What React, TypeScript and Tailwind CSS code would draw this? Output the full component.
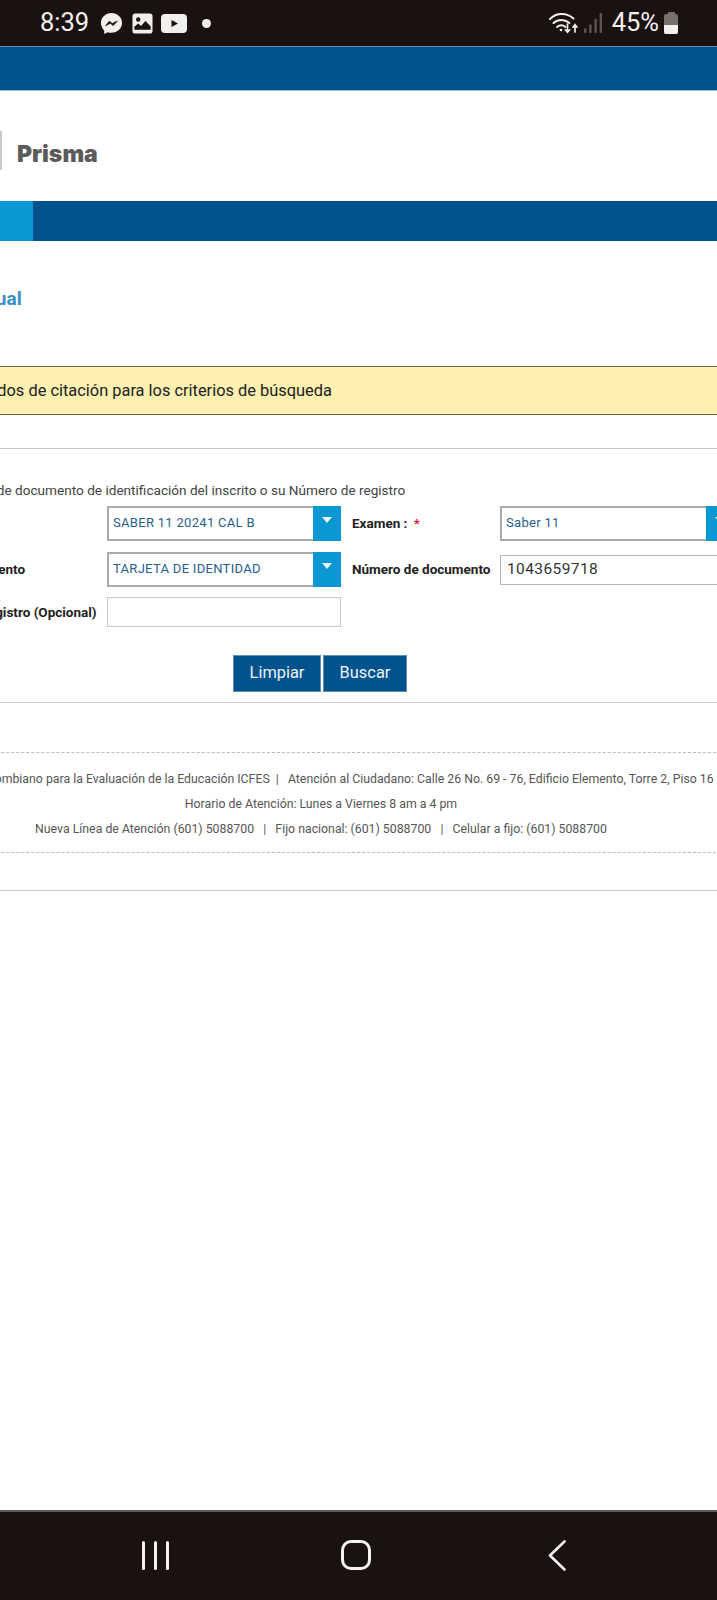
const StatusIcons = () => (
  <div className="flex items-center">
    {/* messenger */}
    <svg viewBox="0 0 24 24" className="w-[23px] h-[23px] ml-[11px]">
      <path d="M12 1C5.800 1 1 5.500 1 11.500c0 3.100 1.300 5.800 3.400 7.700V23l3.600-2c1.200.4 2.600.6 4 .6 6.200 0 11-4.500 11-10.100C23 5.500 18.200 1 12 1z" fill="#f2f0ee" />
      <path d="M5.800 14.200l4-4.600 3 2.400 5.200-2.600-4.200 4.800-3-2.400z" fill="#1a120e" stroke="#1a120e" strokeWidth="0.8" />
    </svg>
    {/* gallery */}
    <svg viewBox="0 0 22 22" className="w-[21px] h-[21px] ml-[9px]">
      <rect x="0.500" y="0.500" width="21" height="21" rx="3" fill="#f2f0ee" />
      <circle cx="6.500" cy="6.800" r="2.300" fill="#1a120e" />
      <path d="M2.500 17.500v-3l4-3.500 3 2.500 4.500-5 5.500 5.500v3.500z" fill="#1a120e" />
    </svg>
    {/* youtube */}
    <svg viewBox="0 0 26 19" className="w-[26px] h-[19px] ml-[8px]">
      <rect x="0" y="0" width="26" height="19" rx="4" fill="#f2f0ee" />
      <path d="M10.500 6l6.500 3.500-6.500 3.500z" fill="#1a120e" />
    </svg>
    <div className="w-[9px] h-[9px] rounded-full bg-[#f2f0ee] ml-[15px]" />
  </div>
);

const SelectBox = ({ value }: { value: string }) => (
  <div className="flex shrink-0 h-[35px] w-[234px] border-2 border-[#a9aaa9] bg-white">
    <span className="flex-1 pl-[4px] text-[13px] leading-[30px] text-[#26608c] tracking-[0.3px]">{value}</span>
    <span className="flex w-[28px] -my-[2px] -mr-[2px] bg-[#0a98d2] justify-center pt-[11px]">
      <svg viewBox="0 0 10 6" className="w-[10px] h-[6px]">
        <path d="M0 0h10L5 6z" fill="#e8f4fa" />
      </svg>
    </span>
  </div>
);

export default function App() {
  return (
    <div className="w-[717px] h-[1600px] flex flex-col overflow-hidden bg-white font-['Roboto',sans-serif]">
      {/* barra de estado */}
      <div className="flex items-center justify-between h-[46px] bg-[#1a120e] pl-[40px] pr-[39px] shrink-0">
        <div className="flex items-center">
          <span className="text-[25.500px] leading-none text-[#f2f0ee]">8:39</span>
          <StatusIcons />
        </div>
        <div className="flex items-center">
          <svg viewBox="0 0 29 24" className="w-[30px] h-[24px]" fill="none" stroke="#f2f0ee" strokeLinecap="round">
            <path d="M1.500 8C8 1.500 18 1.500 25 7.500" strokeWidth="2" />
            <path d="M5 12c4.500-4 11-4 16 0" strokeWidth="2" />
            <path d="M8.500 16c2.500-2 6-2 8.500 0" strokeWidth="2" />
            <circle cx="12.500" cy="19" r="1.300" fill="#f2f0ee" stroke="none" />
            <path d="M19 13v8M16.800 18.800L19 21.300l2.200-2.500M26.500 21v-7M24.500 16.200l2-2.500 2 2.500" strokeWidth="1.700" />
          </svg>
          <svg viewBox="0 0 19 21" className="w-[18px] h-[20px] ml-[6px]" fill="#5c5755">
            <rect x="0" y="16" width="2.500" height="5" rx="1" />
            <rect x="5.500" y="12" width="2.500" height="9" rx="1" />
            <rect x="11" y="6" width="2.500" height="15" rx="1" />
            <rect x="16.500" y="0" width="2.500" height="21" rx="1" />
          </svg>
          <span className="ml-[10px] text-[25.500px] leading-none text-[#f2f0ee]">45%</span>
          <div className="ml-[5px] flex flex-col items-center">
            <div className="w-[7px] h-[2px] bg-[#77706d] rounded-t-[1px]" />
            <div className="w-[14px] h-[20px] rounded-[2px] bg-[#77706d] flex flex-col justify-end overflow-hidden">
              <div className="h-[9px] bg-[#f2f0ee]" />
            </div>
          </div>
        </div>
      </div>

      {/* cabecera */}
      <div className="h-[45px] shrink-0 bg-[#00528c] border-t border-t-[#6f8cab] border-b border-b-[#9cc3dc]" />
      <div className="h-[110px] shrink-0 flex items-center">
        <div className="h-[39px] w-[2px] bg-[#c9c9c9] mt-[8px]" />
        <span className="ml-[15px] text-[23px] font-black leading-none font-['Inter',sans-serif] text-[#5b5b5b] mt-[16px]">
          Prisma
        </span>
      </div>
      <div className="h-[40px] shrink-0 bg-[#00528c]">
        <div className="h-full w-[33px] bg-[#0a98d2]" />
      </div>

      {/* contenido, desplazado a la izquierda como en la captura */}
      <div className="flex-1 -ml-[84px] w-[810px] flex flex-col">
        <h1 className="mt-[47px] ml-[-52px] h-[22px] text-[19px] leading-[22px] font-bold text-[#3a8fc7] whitespace-nowrap">
          Citación individual
        </h1>

        <div className="mt-[56px] h-[49px] flex items-center bg-[#fdf0b0] border-y border-y-[#6e6638]">
          <span className="-ml-[107px] mt-[1px] text-[16.400px] text-[#222] whitespace-nowrap">
            No se encontraron resultados de citación para los criterios de búsqueda
          </span>
        </div>

        <div className="mt-[33px] border-t border-t-[#c8c8c8]" />

        <p className="mt-[32px] -ml-[21px] text-[13.600px] leading-[18px] text-[#444] whitespace-nowrap">
          Digite el número de documento de identificación del inscrito o su Número de registro
        </p>

        <div className="mt-[7px] flex flex-col gap-[10px]">
          <div className="flex items-center">
            <span className="w-[191px] shrink-0" />
            <SelectBox value="SABER 11 20241 CAL B" />
            <span className="w-[148px] ml-[11px] shrink-0 text-[13.500px] font-bold text-[#222]">
              Examen : <span className="text-[#d3262c] ml-[3px]">*</span>
            </span>
            <SelectBox value="Saber 11" />
          </div>
          <div className="flex items-center mt-[1px]">
            <span className="w-[191px] shrink-0 text-[13.500px] font-bold text-[#222]">
              <span className="block -ml-[8px] whitespace-nowrap">Tipo de documento</span>
            </span>
            <SelectBox value="TARJETA DE IDENTIDAD" />
            <span className="w-[148px] ml-[11px] shrink-0 text-[13.500px] font-bold text-[#222] whitespace-nowrap">Número de documento</span>
            <div className="w-[234px] h-[30px] shrink-0 flex items-center pl-[6px] border border-[#b5b5b5] text-[15.500px] tracking-[0.4px] text-[#333]">
              1043659718
            </div>
          </div>
          <div className="flex items-center">
            <span className="w-[191px] shrink-0 text-[13.500px] font-bold text-[#222]">
              <span className="block -ml-[3px] whitespace-nowrap">Número de registro (Opcional)</span>
            </span>
            <div className="w-[234px] h-[30px] shrink-0 border border-[#c8c8c8]" />
          </div>
        </div>

        <div className="mt-[28px] flex justify-center gap-[2px] pr-[2px]">
          <button className="w-[88px] h-[37px] bg-[#00528c] border border-[#5e8eb0] text-[16.400px] text-[#eef4f8]">Limpiar</button>
          <button className="w-[84px] h-[37px] bg-[#00528c] border border-[#5e8eb0] text-[16.400px] text-[#eef4f8]">Buscar</button>
        </div>

        <div className="mt-[10px] border-t border-t-[#c8c8c8]" />

        {/* pie */}
        <div className="mt-[49px] border-y border-dashed border-y-[#bdbdbd] pt-[14px] pb-[10px] text-center text-[12.300px] leading-[25px] text-[#555] whitespace-nowrap">
          <p>Instituto Colombiano para la Evaluación de la Educación ICFES&nbsp; | &nbsp; Atención al Ciudadano: Calle 26 No. 69 - 76, Edificio Elemento, Torre 2, Piso 16</p>
          <p>Horario de Atención: Lunes a Viernes 8 am a 4 pm</p>
          <p>Nueva Línea de Atención (601) 5088700 &nbsp;&nbsp;|&nbsp;&nbsp; Fijo nacional: (601) 5088700 &nbsp;&nbsp;|&nbsp;&nbsp; Celular a fijo: (601) 5088700</p>
        </div>

        <div className="mt-[37px] border-t border-t-[#c8c8c8]" />
      </div>

      {/* navegación android */}
      <div className="h-[90px] shrink-0 bg-[#1a120e] border-t-2 border-t-[#5f5854] flex items-center justify-between pl-[142px] pr-[151px] pb-[2px]">
        <div className="flex gap-[9px]">
          <div className="w-[3px] h-[29px] rounded-full bg-[#f5f3f1]" />
          <div className="w-[3px] h-[29px] rounded-full bg-[#f5f3f1]" />
          <div className="w-[3px] h-[29px] rounded-full bg-[#f5f3f1]" />
        </div>
        <div className="w-[30px] h-[30px] rounded-[10px] border-[3px] border-[#f5f3f1] mr-[5px]" />
        <svg viewBox="0 0 18 31" className="w-[18px] h-[31px]" fill="none" stroke="#f5f3f1" strokeWidth="2.600" strokeLinecap="round" strokeLinejoin="round">
          <path d="M16.500 1.500L2 15.500l14.500 14" />
        </svg>
      </div>
    </div>
  );
}
